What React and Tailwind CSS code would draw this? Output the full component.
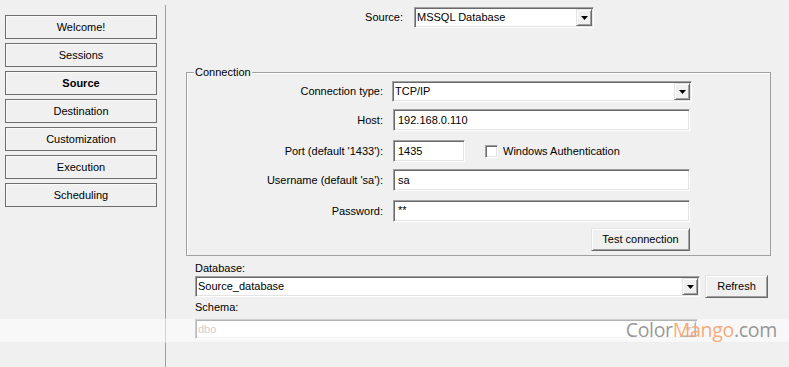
import React from "react";

function Arrow({ disabled }) {
  return (
    <div className="w-[16px] h-full flex items-center justify-center bg-[#f0f0f0] border border-t-[#e3e3e3] border-l-[#e3e3e3] border-r-[#696969] border-b-[#696969] shadow-[inset_1px_1px_0_#ffffff,inset_-1px_-1px_0_#a0a0a0]">
      <svg width="7" height="4" viewBox="0 0 7 4">
        <polygon points="0,0 7,0 3.5,4" fill={disabled ? "#a0a0a0" : "#000000"} />
      </svg>
    </div>
  );
}

function Combo({ className, value, disabled }) {
  return (
    <div
      className={
        "flex bg-white border border-t-[#a0a0a0] border-l-[#a0a0a0] border-r-white border-b-white shadow-[inset_1px_1px_0_#696969,inset_-1px_-1px_0_#e3e3e3] p-[1px] " +
        className
      }
    >
      <div
        className={
          "flex-1 flex items-center pl-[1px] leading-[13px] " +
          (disabled ? "text-[#9a9a9a]" : "text-black")
        }
      >
        {value}
      </div>
      <Arrow disabled={disabled} />
    </div>
  );
}

function Field({ className, value }) {
  return (
    <div
      className={
        "flex items-center bg-white border border-t-[#a0a0a0] border-l-[#a0a0a0] border-r-white border-b-white shadow-[inset_1px_1px_0_#696969,inset_-1px_-1px_0_#e3e3e3] pl-[4px] leading-[13px] text-black " +
        className
      }
    >
      {value}
    </div>
  );
}

function Btn({ className, children }) {
  return (
    <div
      className={
        "flex items-center justify-center bg-[#f0f0f0] border border-t-[#e3e3e3] border-l-[#e3e3e3] border-r-[#696969] border-b-[#696969] shadow-[inset_1px_1px_0_#ffffff,inset_-1px_-1px_0_#a0a0a0] text-black leading-[13px] " +
        className
      }
    >
      {children}
    </div>
  );
}

function Label({ children }) {
  return (
    <div className="w-[196px] text-right leading-[13px] text-black shrink-0">
      {children}
    </div>
  );
}

const nav = [
  "Welcome!",
  "Sessions",
  "Source",
  "Destination",
  "Customization",
  "Execution",
  "Scheduling",
];

export default function App() {
  return (
    <div className="relative w-[789px] h-[367px] bg-[#f0f0f0] flex overflow-hidden font-['Liberation_Sans',Arial,sans-serif] text-[11px] text-black">
      <aside className="w-[165px] shrink-0 flex flex-col gap-[4px] pt-[15px] pl-[5px]">
        {nav.map((n) => (
          <div
            key={n}
            className={
              "w-[152px] h-[24px] flex items-center justify-center border border-[#6e6e6e] bg-[#f0f0f0] shadow-[inset_1px_1px_0_#fafafa] leading-[13px] " +
              (n === "Source" ? "font-bold" : "")
            }
          >
            {n}
          </div>
        ))}
      </aside>
      <div className="w-px shrink-0 bg-[#a0a0a0] mt-[5px]" />
      <main className="flex-1 flex flex-col">
        <div className="flex items-center h-[21px] mt-[7px]">
          <div className="w-[237px] text-right leading-[13px]">Source:</div>
          <Combo className="ml-[11px] w-[180px] h-[21px]" value="MSSQL Database" />
        </div>

        <div className="relative ml-[20px] mt-[44px] w-[585px] h-[184px] border border-[#a0a0a0] shadow-[inset_1px_1px_0_#ffffff] flex flex-col pt-[8px]">
          <span className="absolute top-[-7px] left-[7px] px-[1px] bg-[#f0f0f0] leading-[13px]">
            Connection
          </span>
          <div className="flex items-center h-[21px]">
            <Label>Connection type:</Label>
            <Combo className="ml-[9px] w-[300px] h-[21px]" value="TCP/IP" />
          </div>
          <div className="flex items-center h-[22px] mt-[7px]">
            <Label>Host:</Label>
            <Field className="ml-[10px] w-[297px] h-[22px]" value="192.168.0.110" />
          </div>
          <div className="flex items-center h-[22px] mt-[9px]">
            <Label>Port (default '1433'):</Label>
            <Field className="ml-[10px] w-[72px] h-[22px]" value="1435" />
            <div className="ml-[20px] w-[13px] h-[13px] bg-white border border-t-[#a0a0a0] border-l-[#a0a0a0] border-r-white border-b-white shadow-[inset_1px_1px_0_#696969,inset_-1px_-1px_0_#e3e3e3]" />
            <span className="ml-[5px] leading-[13px]">Windows Authentication</span>
          </div>
          <div className="flex items-center h-[22px] mt-[7px]">
            <Label>Username (default 'sa'):</Label>
            <Field className="ml-[10px] w-[297px] h-[22px]" value="sa" />
          </div>
          <div className="flex items-center h-[22px] mt-[9px]">
            <Label>Password:</Label>
            <Field className="ml-[10px] w-[297px] h-[22px] items-start pt-[3px]" value="**" />
          </div>
          <div className="flex justify-end mt-[6px] mr-[80px]">
            <Btn className="w-[99px] h-[23px]">Test connection</Btn>
          </div>
        </div>

        <div className="ml-[29px] mt-[6px] leading-[13px]">Database:</div>
        <div className="ml-[29px] flex items-center h-[23px]">
          <Combo className="w-[505px] h-[21px]" value="Source_database" />
          <Btn className="ml-[5px] w-[63px] h-[23px]">Refresh</Btn>
        </div>
        <div className="ml-[29px] mt-[3px] leading-[13px]">Schema:</div>
        <div className="ml-[29px] mt-[5px] flex">
          <Combo className="w-[503px] h-[20px]" value="dbo" disabled />
        </div>
      </main>

      <div className="absolute left-0 top-[318px] w-full h-[25px] bg-white/50 border-y border-black/[0.04]" />
      <div className="absolute right-[12px] top-[317px] h-[26px] flex items-center font-['Open_Sans',sans-serif] text-[19.5px] leading-[26px] tracking-[-0.3px]">
        <span className="text-[#8a8a8a]/90">Color</span>
        <span className="text-[#f7a16b]/90">Mango</span>
        <span className="text-[#8a8a8a]/90">.com</span>
      </div>
    </div>
  );
}
